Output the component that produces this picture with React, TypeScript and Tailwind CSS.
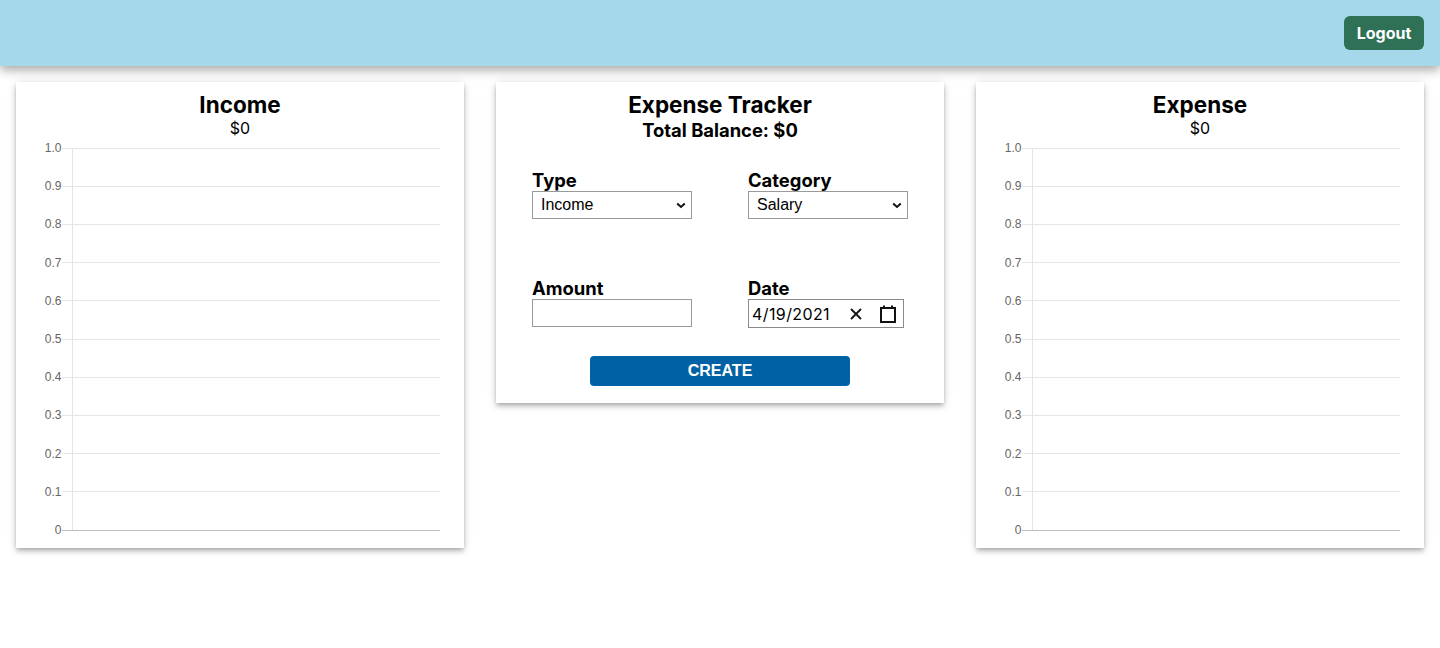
import React from "react";

const ticks = ["1.0", "0.9", "0.8", "0.7", "0.6", "0.5", "0.4", "0.3", "0.2", "0.1", "0"];

function Chart() {
  const top = 8;
  const bottom = 390;
  const step = (bottom - top) / 10;
  return (
    <svg width="448" height="400" viewBox="0 0 448 400" className="block">
      {ticks.map((t, i) => {
        const y = top + i * step;
        const isZero = i === 10;
        return (
          <g key={t}>
            <line x1={46} x2={424} y1={y} y2={y} stroke={isZero ? "#bdbdbd" : "#e5e5e5"} strokeWidth={1} shapeRendering="crispEdges" />
            <text x={45.5} y={y + 4} textAnchor="end" fontSize="12" fill="#666666" fontFamily="'Liberation Sans', Arial, sans-serif">
              {t}
            </text>
          </g>
        );
      })}
      <line x1={56} x2={56} y1={top} y2={bottom} stroke="#e5e5e5" strokeWidth={1} shapeRendering="crispEdges" />
    </svg>
  );
}

function ChartCard({ title }: { title: string }) {
  return (
    <div className="bg-white h-[466px] shadow-[0_2px_4px_-1px_rgba(0,0,0,0.2),0_4px_5px_0_rgba(0,0,0,0.14),0_1px_10px_0_rgba(0,0,0,0.12)] flex flex-col items-center">
      <h2 className="mt-[9px] text-[22.5px] leading-[28px] font-bold text-black">{title}</h2>
      <div className="text-[16px] leading-[18px] text-black">$0</div>
      <div className="mt-[3px]">
        <Chart />
      </div>
    </div>
  );
}

function Chevron() {
  return (
    <svg width="10" height="7" viewBox="0 0 10 7">
      <path d="M1.2 1.5 L5 5 L8.8 1.5" fill="none" stroke="#111" strokeWidth="2" />
    </svg>
  );
}

function FakeSelect({ value }: { value: string }) {
  return (
    <div className="w-[160px] h-[28px] border border-[#9a9a9a] bg-white flex items-center justify-between pl-[8px] pr-[5px] text-[16px] text-black font-['Liberation_Sans',Arial,sans-serif]">
      <span>{value}</span>
      <Chevron />
    </div>
  );
}

export default function App() {
  return (
    <div className="min-h-[648px] bg-white font-['Inter','Noto_Sans',sans-serif] text-black">
      <header className="relative z-10 h-[66px] bg-[#a5d8e8] shadow-[0_4px_10px_rgba(0,0,0,0.35)] flex items-center justify-end px-[16px]">
        <button className="w-[80px] h-[34px] rounded-[6px] bg-[#2e7156] text-white text-[16px] font-bold">Logout</button>
      </header>
      <main className="grid grid-cols-3 gap-[32px] px-[16px] pt-[16px] items-start">
        <ChartCard title="Income" />
        <div className="bg-white h-[321px] shadow-[0_2px_4px_-1px_rgba(0,0,0,0.2),0_4px_5px_0_rgba(0,0,0,0.14),0_1px_10px_0_rgba(0,0,0,0.12)] flex flex-col">
          <div className="flex flex-col items-center">
            <h2 className="mt-[9px] text-[22.5px] leading-[28px] font-bold">Expense Tracker</h2>
            <div className="text-[18.4px] leading-[22px] font-bold">Total Balance: $0</div>
          </div>
          <div className="pl-[36px] mt-[28px] grid grid-cols-[216px_160px] gap-y-[58px]">
            <div>
              <div className="text-[18.4px] leading-[22px] font-bold">Type</div>
              <FakeSelect value="Income" />
            </div>
            <div>
              <div className="text-[18.4px] leading-[22px] font-bold">Category</div>
              <FakeSelect value="Salary" />
            </div>
            <div>
              <div className="text-[18.4px] leading-[22px] font-bold">Amount</div>
              <div className="w-[160px] h-[28px] border border-[#9a9a9a] bg-white" />
            </div>
            <div>
              <div className="text-[18.4px] leading-[22px] font-bold">Date</div>
              <div className="w-[156px] h-[29px] border border-[#8a8a8a] bg-white flex items-center pl-[3px] text-[16px]">
                <span className="tracking-[0.4px]">4/19/2021</span>
                <svg className="ml-[20px]" width="12" height="12" viewBox="0 0 12 12">
                  <path d="M1 1 L11 11 M11 1 L1 11" stroke="#111" strokeWidth="1.8" />
                </svg>
                <svg className="ml-[18px]" width="16" height="18" viewBox="0 0 16 18">
                  <rect x="1" y="3" width="14" height="14" fill="none" stroke="#111" strokeWidth="2" />
                  <path d="M4 0.5 V4 M12 0.5 V4" stroke="#111" strokeWidth="2" />
                </svg>
              </div>
            </div>
          </div>
          <div className="flex justify-center mt-[28px]">
            <button className="w-[260px] h-[30px] rounded-[4px] bg-[#0062a5] text-white text-[16px] font-bold font-['Liberation_Sans',Arial,sans-serif]">CREATE</button>
          </div>
        </div>
        <ChartCard title="Expense" />
      </main>
    </div>
  );
}
